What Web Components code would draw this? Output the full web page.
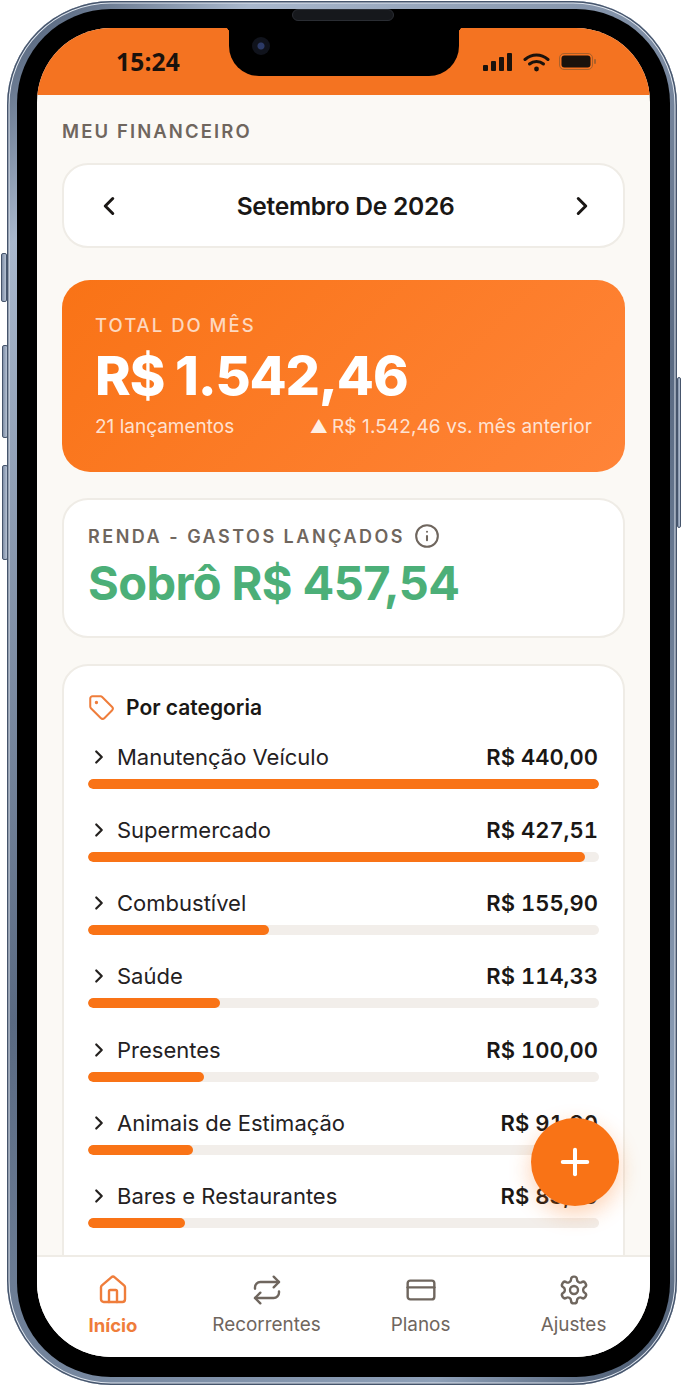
<!DOCTYPE html>
<html lang="pt-BR">
<head>
<meta charset="utf-8">
<title>Meu Financeiro</title>
<style>
  html, body { margin: 0; background: #fff; }
  body { font-family: Inter, "Liberation Sans", sans-serif; color: #1f1c1a; }
</style>
</head>
<body>
<phone-frame>
  <status-bar></status-bar>
  <app-content>
    <month-nav>Setembro De 2026</month-nav>
    <total-card></total-card>
    <balance-card></balance-card>
    <category-card>
      <category-row name="Manutenção Veículo" value="R$ 440,00" pct="100"></category-row>
      <category-row name="Supermercado" value="R$ 427,51" pct="97.2"></category-row>
      <category-row name="Combustível" value="R$ 155,90" pct="35.4"></category-row>
      <category-row name="Saúde" value="R$ 114,33" pct="25.8"></category-row>
      <category-row name="Presentes" value="R$ 100,00" pct="22.7"></category-row>
      <category-row name="Animais de Estimação" value="R$ 91,90" pct="20.6"></category-row>
      <category-row name="Bares e Restaurantes" value="R$ 83,20" pct="19"></category-row>
    </category-card>
  </app-content>
  <fab-button></fab-button>
  <tab-bar>
    <tab-item label="Início" icon="home" active></tab-item>
    <tab-item label="Recorrentes" icon="repeat"></tab-item>
    <tab-item label="Planos" icon="card"></tab-item>
    <tab-item label="Ajustes" icon="gear"></tab-item>
  </tab-bar>
</phone-frame>

<script>
const ICONS = {
  home: '<path d="M15 21v-8a1 1 0 0 0-1-1h-4a1 1 0 0 0-1 1v8"/><path d="M3 10a2 2 0 0 1 .709-1.528l7-5.999a2 2 0 0 1 2.582 0l7 5.999A2 2 0 0 1 21 10v9a2 2 0 0 1-2 2H5a2 2 0 0 1-2-2z"/>',
  repeat: '<path d="m17 2 4 4-4 4"/><path d="M3 11v-1a4 4 0 0 1 4-4h14"/><path d="m7 22-4-4 4-4"/><path d="M21 13v1a4 4 0 0 1-4 4H3"/>',
  card: '<rect x="2" y="5" width="20" height="14" rx="2"/><path d="M2 10h20"/>',
  gear: '<path d="M12.22 2h-.44a2 2 0 0 0-2 2v.18a2 2 0 0 1-1 1.73l-.43.25a2 2 0 0 1-2 0l-.15-.08a2 2 0 0 0-2.73.73l-.22.38a2 2 0 0 0 .73 2.73l.15.1a2 2 0 0 1 1 1.72v.51a2 2 0 0 1-1 1.74l-.15.09a2 2 0 0 0-.73 2.73l.22.38a2 2 0 0 0 2.73.73l.15-.08a2 2 0 0 1 2 0l.43.25a2 2 0 0 1 1 1.73V20a2 2 0 0 0 2 2h.44a2 2 0 0 0 2-2v-.18a2 2 0 0 1 1-1.73l.43-.25a2 2 0 0 1 2 0l.15.08a2 2 0 0 0 2.73-.73l.22-.39a2 2 0 0 0-.73-2.73l-.15-.08a2 2 0 0 1-1-1.74v-.5a2 2 0 0 1 1-1.74l.15-.09a2 2 0 0 0 .73-2.73l-.22-.38a2 2 0 0 0-2.73-.73l-.15.08a2 2 0 0 1-2 0l-.43-.25a2 2 0 0 1-1-1.73V4a2 2 0 0 0-2-2z"/><circle cx="12" cy="12" r="3"/>',
  tag: '<path d="M12.586 2.586A2 2 0 0 0 11.172 2H4a2 2 0 0 0-2 2v7.172a2 2 0 0 0 .586 1.414l8.704 8.704a2.426 2.426 0 0 0 3.42 0l6.58-6.58a2.426 2.426 0 0 0 0-3.42z"/><circle cx="7.5" cy="7.5" r=".6" fill="currentColor"/>',
  info: '<circle cx="12" cy="12" r="10"/><path d="M12 16v-4"/><path d="M12 8h.01"/>',
  left: '<path d="m15 18-6-6 6-6"/>',
  right: '<path d="m9 18 6-6-6-6"/>',
  plus: '<path d="M5 12h14"/><path d="M12 5v14"/>'
};

function icon(name, size, width) {
  return `<svg width="${size}" height="${size}" viewBox="0 0 24 24" fill="none" stroke="currentColor" stroke-width="${width}" stroke-linecap="round" stroke-linejoin="round">${ICONS[name]}</svg>`;
}

class PhoneFrame extends HTMLElement {
  constructor() {
    super();
    this.attachShadow({ mode: "open" });
    this.shadowRoot.innerHTML = `
      <style>
        :host {
          display: block;
          position: relative;
          box-sizing: border-box;
          width: 682px;
          height: 1386px;
          padding: 1px 5px 1px 7px;
        }
        .metal {
          box-sizing: border-box;
          height: 100%;
          padding: 8px 7px 8px 10px;
          border-radius: 104px;
          background: linear-gradient(135deg, #44546c, #a9b8cd 12%, #5a6a82 50%, #8ea0b8 88%, #3f4e64);
          box-shadow: inset 0 0 0 1.5px #46556c, inset 0 0 0 2.5px #dfe6ef;
        }
        .bezel {
          box-sizing: border-box;
          height: 100%;
          padding: 19px 20px 20px 20px;
          border-radius: 94px;
          background: #000;
        }
        .screen {
          display: flex;
          flex-direction: column;
          height: 100%;
          overflow: hidden;
          position: relative;
          border-radius: 74px;
          background: #fbf9f5;
        }
        /* hardware bits sit over the frame */
        .btn {
          position: absolute;
          width: 6px;
          box-sizing: border-box;
          background: linear-gradient(90deg, #7f8ea6, #b7c3d4);
          border: 1px solid #46556c;
          border-radius: 2px;
        }
        .notch {
          position: absolute;
          left: 229px;
          top: 27px;
          width: 230px;
          height: 49px;
          background: #000;
          border-radius: 0 0 30px 30px;
        }
        .notch::before, .notch::after {
          content: "";
          position: absolute;
          top: 0;
          width: 6px;
          height: 6px;
        }
        .notch::before { left: -6px; background: radial-gradient(circle at 0 100%, transparent 6px, #000 6.5px); }
        .notch::after { right: -6px; background: radial-gradient(circle at 100% 100%, transparent 6px, #000 6.5px); }
        .camera {
          position: absolute;
          left: 252px;
          top: 37px;
          width: 18px;
          height: 18px;
          border-radius: 50%;
          background: radial-gradient(circle, #2c3a66 0 3px, #10131c 4px 9px);
        }
        .speaker {
          position: absolute;
          left: 292px;
          top: 9px;
          width: 102px;
          height: 12px;
          box-sizing: border-box;
          border-radius: 6px;
          background: #16181c;
          border: 1px solid #2a2d33;
        }
      </style>
      <div class="btn" style="left:1px;top:253px;height:49px"></div>
      <div class="btn" style="left:2px;top:345px;height:93px"></div>
      <div class="btn" style="left:2px;top:465px;height:95px"></div>
      <div class="btn" style="left:677px;top:377px;height:151px;width:4px"></div>
      <div class="metal"><div class="bezel"><div class="screen"><slot></slot></div></div></div>
      <div class="notch"></div>
      <div class="camera"></div>
      <div class="speaker"></div>
    `;
  }
}

class StatusBar extends HTMLElement {
  constructor() {
    super();
    this.attachShadow({ mode: "open" });
    this.shadowRoot.innerHTML = `
      <style>
        :host {
          display: flex;
          flex: none;
          align-items: center;
          justify-content: space-between;
          box-sizing: border-box;
          height: 67px;
          padding: 0 53px 0 79px;
          background: #f47321;
          color: #1a120c;
        }
        .time { font: 700 24.5px "Open Sans", sans-serif; letter-spacing: .2px; }
        .icons { display: flex; align-items: center; gap: 9px; }
      </style>
      <span class="time">15:24</span>
      <span class="icons">
        <svg width="31" height="20" viewBox="0 0 31 20" fill="currentColor"><rect x="0" y="13" width="5" height="6" rx="1"/><rect x="8" y="9" width="5" height="10" rx="1"/><rect x="16" y="5" width="5" height="14" rx="1"/><rect x="24" y="1" width="5" height="18" rx="1"/></svg>
        <svg width="27" height="20" viewBox="0 0 27 20" fill="none" stroke="currentColor" stroke-width="3" stroke-linecap="round"><path d="M2 7.5C9 1.500 18 1.500 25 7.500"/><path d="M6.500 12C10.500 8.500 16.500 8.500 20.500 12"/><circle cx="13.500" cy="17" r="2.400" fill="currentColor" stroke="none"/></svg>
        <svg width="38" height="18" viewBox="0 0 38 18" fill="currentColor"><rect x=".5" y=".5" width="33" height="16" rx="4.500" fill="none" stroke="#a9602a"/><rect x="2.500" y="2.500" width="29" height="12" rx="3"/><rect x="35" y="6" width="2" height="5" rx="1" fill="#a9602a"/></svg>
      </span>
    `;
  }
}

class AppContent extends HTMLElement {
  constructor() {
    super();
    this.attachShadow({ mode: "open" });
    this.shadowRoot.innerHTML = `
      <style>
        :host {
          display: flex;
          flex-direction: column;
          flex: 1;
          min-height: 0;
          overflow: hidden;
          box-sizing: border-box;
          padding: 25px 25px 0;
        }
        h1 {
          margin: 0 0 21px;
          font: 600 18.5px/22px Inter, sans-serif;
          letter-spacing: 2.1px;
          color: #6f665e;
        }
        .stack { display: flex; flex-direction: column; }
        ::slotted(month-nav) { margin-bottom: 32px; }
        ::slotted(total-card) { margin-bottom: 26px; }
        ::slotted(balance-card) { margin-bottom: 26px; }
      </style>
      <h1>MEU FINANCEIRO</h1>
      <div class="stack"><slot></slot></div>
    `;
  }
}

class MonthNav extends HTMLElement {
  constructor() {
    super();
    this.attachShadow({ mode: "open" });
    this.shadowRoot.innerHTML = `
      <style>
        :host {
          display: flex;
          align-items: center;
          justify-content: space-between;
          box-sizing: border-box;
          height: 85px;
          padding: 0 26px 0 30px;
          background: #fff;
          border: 2px solid #efece6;
          border-radius: 26px;
          color: #1a1715;
        }
        .title { font: 600 24.6px "Inter", sans-serif; letter-spacing: -.3px; }
        svg { display: block; }
      </style>
      ${icon("left", 30, 2.4)}
      <span class="title"><slot></slot></span>
      ${icon("right", 30, 2.4)}
    `;
  }
}

class TotalCard extends HTMLElement {
  constructor() {
    super();
    this.attachShadow({ mode: "open" });
    this.shadowRoot.innerHTML = `
      <style>
        :host {
          display: block;
          box-sizing: border-box;
          height: 192px;
          padding: 33px 33px 0 33px;
          border-radius: 28px;
          background: linear-gradient(135deg, #f97316, #ff8438);
          color: #fff;
        }
        .label { font: 500 18.5px/24px Inter, sans-serif; letter-spacing: 2px; color: rgba(255,255,255,.72); }
        .amount { font: 800 54px/66px Inter, sans-serif; letter-spacing: -1.1px; margin: 6px 0 0; }
        .foot {
          display: flex;
          justify-content: space-between;
          margin-top: 5px;
          font: 400 19px/26px Inter, sans-serif;
          color: rgba(255,255,255,.8);
        }
        .delta { letter-spacing: .1px; }
        .up { display: inline-block; margin-right: 4px; font-size: 18px; color: rgba(255,255,255,.88); }
      </style>
      <div class="label">TOTAL DO MÊS</div>
      <div class="amount">R$ 1.542,46</div>
      <div class="foot"><span>21 lançamentos</span><span class="delta"><span class="up">▲</span>R$ 1.542,46 vs. mês anterior</span></div>
    `;
  }
}

class BalanceCard extends HTMLElement {
  constructor() {
    super();
    this.attachShadow({ mode: "open" });
    this.shadowRoot.innerHTML = `
      <style>
        :host {
          display: block;
          box-sizing: border-box;
          height: 140px;
          padding: 22px 24px 0;
          background: #fff;
          border: 2px solid #efece6;
          border-radius: 26px;
        }
        .label {
          display: flex;
          align-items: center;
          gap: 9px;
          height: 28px;
          font: 600 18px Inter, sans-serif;
          letter-spacing: 2.5px;
          color: #6f665e;
        }
        .amount { font: 700 47px/60px Inter, sans-serif; letter-spacing: -.6px; color: #4caf78; margin-top: 3px; }
      </style>
      <div class="label"><span>RENDA - GASTOS LANÇADOS</span>${icon("info", 26, 1.9)}</div>
      <div class="amount">Sobrô R$ 457,54</div>
    `;
  }
}

class CategoryCard extends HTMLElement {
  constructor() {
    super();
    this.attachShadow({ mode: "open" });
    this.shadowRoot.innerHTML = `
      <style>
        :host {
          display: block;
          box-sizing: border-box;
          padding: 26px 24px 40px;
          background: #fff;
          border: 2px solid #efece6;
          border-radius: 26px;
        }
        .head {
          display: flex;
          align-items: center;
          gap: 11px;
          height: 30px;
          margin-bottom: 17px;
          font: 600 21px Inter, sans-serif;
          color: #1a1715;
        }
        .head svg { color: #ef7d3b; }
      </style>
      <div class="head">${icon("tag", 27, 1.8)}<span>Por categoria</span></div>
      <slot></slot>
    `;
  }
}

class CategoryRow extends HTMLElement {
  constructor() {
    super();
    this.attachShadow({ mode: "open" });
    this.shadowRoot.innerHTML = `
      <style>
        :host { display: block; height: 73.17px; }
        .top {
          display: flex;
          align-items: center;
          height: 36px;
          margin-bottom: 4px;
          font: 400 22px Inter, sans-serif;
          color: #24211f;
        }
        .chev { display: flex; width: 29px; margin-left: 0; }
        .name { flex: 1; }
        .value { font-weight: 600; font-size: 22px; font-variant-numeric: tabular-nums; color: #1a1715; margin-right: 1px; }
        .rail { height: 10px; border-radius: 5px; background: #f2eeea; overflow: hidden; }
        .fill { height: 100%; border-radius: 5px; background: #f97316; }
      </style>
      <div class="top">
        <span class="chev">${icon("right", 22, 2.4)}</span>
        <span class="name"></span>
        <span class="value"></span>
      </div>
      <div class="rail"><div class="fill"></div></div>
    `;
  }
  connectedCallback() {
    this.shadowRoot.querySelector(".name").textContent = this.getAttribute("name");
    this.shadowRoot.querySelector(".value").textContent = this.getAttribute("value");
    this.shadowRoot.querySelector(".fill").style.width = this.getAttribute("pct") + "%";
  }
}

class FabButton extends HTMLElement {
  constructor() {
    super();
    this.attachShadow({ mode: "open" });
    this.shadowRoot.innerHTML = `
      <style>
        :host {
          display: flex;
          align-items: center;
          justify-content: center;
          position: absolute;
          left: 494px;
          top: 1090px;
          width: 88px;
          height: 88px;
          border-radius: 50%;
          background: #f97316;
          color: #fff;
          box-shadow: 0 8px 22px rgba(249,115,22,.32);
          z-index: 2;
        }
      </style>
      ${icon("plus", 42, 2.3)}
    `;
  }
}

class TabBar extends HTMLElement {
  constructor() {
    super();
    this.attachShadow({ mode: "open" });
    this.shadowRoot.innerHTML = `
      <style>
        :host {
          display: grid;
          grid-template-columns: 152px 155px 153px 153px;
          flex: none;
          box-sizing: border-box;
          height: 102px;
          background: #fff;
          border-top: 2px solid #efece6;
        }
      </style>
      <slot></slot>
    `;
  }
}

class TabItem extends HTMLElement {
  constructor() {
    super();
    this.attachShadow({ mode: "open" });
    this.shadowRoot.innerHTML = `
      <style>
        :host {
          display: flex;
          flex-direction: column;
          align-items: center;
          padding-top: 17px;
          color: #6f665e;
          font: 400 18.9px/26px Inter, sans-serif;
        }
        :host([active]) { color: #ef7d3b; font-weight: 700; font-size: 18.5px; }
        svg { display: block; margin-bottom: 6px; }
      </style>
      <span class="ic"></span>
      <span class="label"></span>
    `;
  }
  connectedCallback() {
    this.shadowRoot.querySelector(".ic").innerHTML = icon(this.getAttribute("icon"), 32, 1.8);
    this.shadowRoot.querySelector(".label").textContent = this.getAttribute("label");
  }
}

customElements.define("phone-frame", PhoneFrame);
customElements.define("status-bar", StatusBar);
customElements.define("app-content", AppContent);
customElements.define("month-nav", MonthNav);
customElements.define("total-card", TotalCard);
customElements.define("balance-card", BalanceCard);
customElements.define("category-card", CategoryCard);
customElements.define("category-row", CategoryRow);
customElements.define("fab-button", FabButton);
customElements.define("tab-bar", TabBar);
customElements.define("tab-item", TabItem);
</script>
</body>
</html>
